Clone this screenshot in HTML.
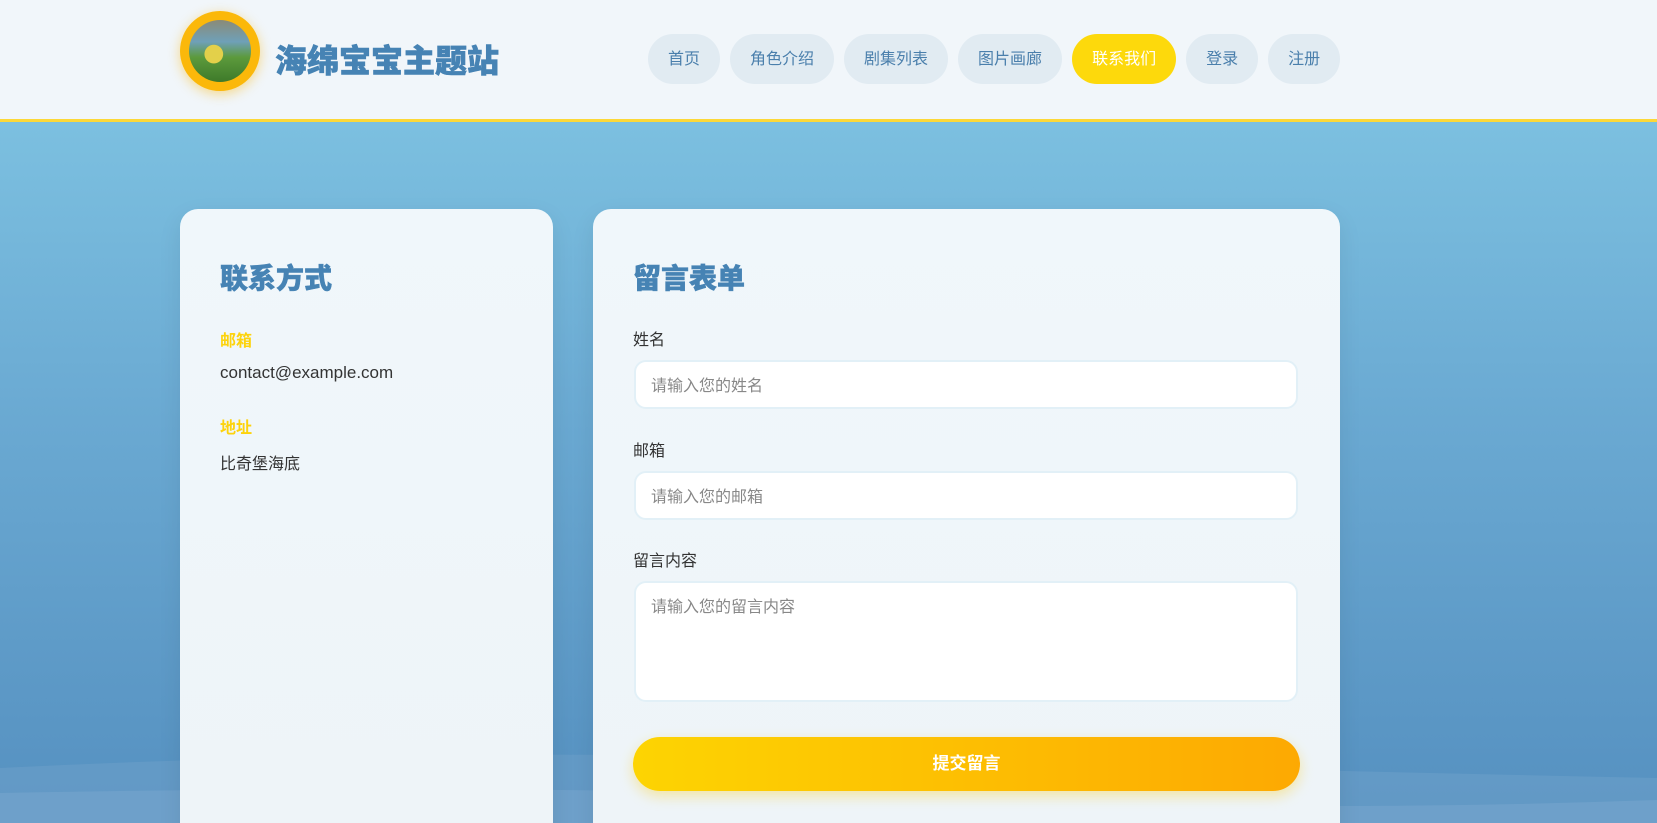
<!DOCTYPE html>
<html><head><meta charset="utf-8">
<style>
*{box-sizing:border-box;margin:0;padding:0}
html,body{width:1657px;height:823px;overflow:hidden}
body{font-family:"Liberation Sans","Noto Sans CJK SC",sans-serif;background:linear-gradient(180deg,#7cc0e0 120px,#6aa9d2 420px,#5590c0 823px);position:relative}
.wave{position:absolute;left:0;right:0;bottom:0;height:95px;pointer-events:none}
header{position:absolute;left:0;top:0;width:1657px;height:122px;background:#f1f6fa;border-bottom:3px solid #fcd838}
.logo{position:absolute;left:180px;top:11px;width:80px;height:80px;border-radius:50%;background:#fbb80a;box-shadow:0 3px 12px rgba(250,180,0,.45)}
.logo i{position:absolute;left:9px;top:9px;width:62px;height:62px;border-radius:50%;background:radial-gradient(circle at 40% 55%,#e3d04a 0 18%,transparent 19%),linear-gradient(180deg,#8a8a78 0,#6fa0b8 35%,#5c9a3c 60%,#3e7a2a 100%)}
.title{position:absolute;left:275px;top:36px;font-size:32px;font-weight:900;color:#4683b4;-webkit-text-stroke:0.6px #4683b4}
nav{position:absolute;left:648px;top:34px;display:flex;gap:10px}
nav a{display:block;height:50px;line-height:52px;padding:0 20px;border-radius:25px;background:#e1ebf2;color:#4a7fac;font-size:16px;text-decoration:none}
nav a.on{background:#fdd90c;color:#fff}
.card{position:absolute;top:209px;background:linear-gradient(180deg,#f0f7fb,#eef4f8);border-radius:18px;height:640px;box-shadow:0 8px 24px rgba(0,0,0,.08)}
.c1{left:180px;width:373px}
.c2{left:593px;width:747px}
h2{position:absolute;font-size:28px;font-weight:900;color:#4683b4;top:48px;left:40px;-webkit-text-stroke:0.5px #4683b4}
.lab{position:absolute;left:40px;font-size:16px;font-weight:bold;color:#fdd30c}
.txt{position:absolute;left:40px;font-size:17px;color:#333}
.fl{position:absolute;left:40px;font-size:16px;color:#333}
.in{position:absolute;left:41px;width:664px;background:#fff;border:2px solid #e2f0f7;border-radius:12px;color:#888;font-size:16px;padding:10px 15px}
.btn{position:absolute;left:40px;top:528px;width:667px;height:54px;border-radius:27px;background:linear-gradient(90deg,#fdd402,#fda902);color:#fff;font-weight:bold;font-size:17px;text-align:center;line-height:54px;box-shadow:0 5px 14px rgba(253,200,0,.35)}
</style></head><body>
<svg class="wave" viewBox="0 0 1657 95" preserveAspectRatio="none"><path d="M0 40 Q400 20 800 30 T1657 50 V95 H0Z" fill="#6a9ec8" opacity=".6"/><path d="M0 65 Q500 55 900 70 T1657 72 V95 H0Z" fill="#7aa8cf" opacity=".5"/></svg>
<header>
<div class="logo"><i></i></div>
<div class="title">海绵宝宝主题站</div>
<nav><a>首页</a><a>角色介绍</a><a>剧集列表</a><a>图片画廊</a><a class="on">联系我们</a><a>登录</a><a>注册</a></nav>
</header>
<div class="card c1">
<h2>联系方式</h2>
<div class="lab" style="top:118px">邮箱</div>
<div class="txt" style="top:154px">contact@example.com</div>
<div class="lab" style="top:205px">地址</div>
<div class="txt" style="top:241px;font-size:16px">比奇堡海底</div>
</div>
<div class="card c2">
<h2>留言表单</h2>
<div class="fl" style="top:117px">姓名</div>
<div class="in" style="top:151px;height:49px">请输入您的姓名</div>
<div class="fl" style="top:228px">邮箱</div>
<div class="in" style="top:262px;height:49px">请输入您的邮箱</div>
<div class="fl" style="top:338px">留言内容</div>
<div class="in" style="top:372px;height:121px">请输入您的留言内容</div>
<div class="btn">提交留言</div>
</div>
</body></html>
